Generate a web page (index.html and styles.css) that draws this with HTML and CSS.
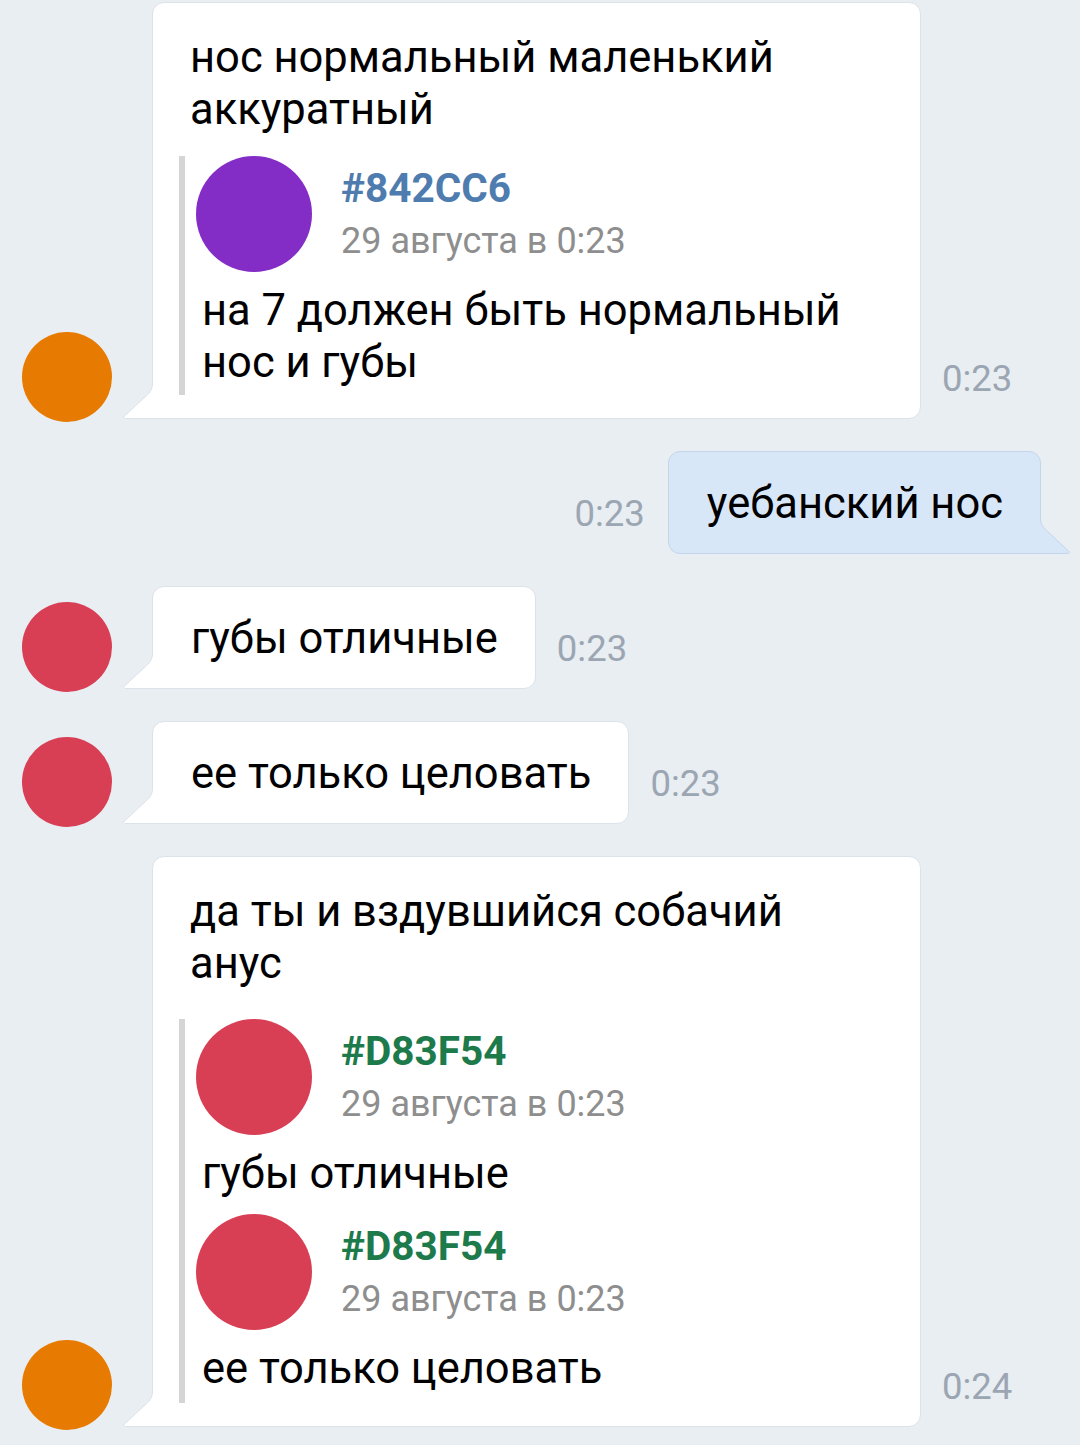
FILE: index.html
```html
<!DOCTYPE html>
<html lang="ru">
<head>
  <meta charset="UTF-8">
  <title>Сообщения</title>
  <link rel="stylesheet" href="styles.css">
</head>
<body>
  <div class="chat">

    <div class="row in">
      <div class="avatar av-orange"></div>
      <div class="bubble wide">
        <div class="text">нос нормальный маленький аккуратный</div>
        <div class="fwd">
          <div class="fwd-item">
            <div class="fwd-head">
              <div class="fwd-avatar av-purple"></div>
              <div class="fwd-meta">
                <div class="fwd-name name-blue">#842CC6</div>
                <div class="fwd-date">29 августа в 0:23</div>
              </div>
            </div>
            <div class="fwd-text">на 7 должен быть нормальный нос и губы</div>
          </div>
        </div>
        <svg class="tail" viewBox="0 0 32 36"><path class="tail-fill" d="M32 0 V36 H4 C1.5 36 0.8 34.6 2.5 33 L24.5 12.5 C28 9.5 30.5 6 30.5 0 Z"/><path class="tail-line" d="M30.5 0 C30.5 6 28 9.5 24.5 12.5 L2.5 33 C0.8 34.6 1.5 35.5 4 35.5 H32"/></svg>
      </div>
      <div class="time">0:23</div>
    </div>

    <div class="row out">
      <div class="time">0:23</div>
      <div class="bubble mine">
        <div class="text">уебанский нос</div>
        <svg class="tail" viewBox="0 0 32 36"><path class="tail-fill" d="M32 0 V36 H4 C1.5 36 0.8 34.6 2.5 33 L24.5 12.5 C28 9.5 30.5 6 30.5 0 Z"/><path class="tail-line" d="M30.5 0 C30.5 6 28 9.5 24.5 12.5 L2.5 33 C0.8 34.6 1.5 35.5 4 35.5 H32"/></svg>
      </div>
    </div>

    <div class="row in">
      <div class="avatar av-red"></div>
      <div class="bubble">
        <div class="text">губы отличные</div>
        <svg class="tail" viewBox="0 0 32 36"><path class="tail-fill" d="M32 0 V36 H4 C1.5 36 0.8 34.6 2.5 33 L24.5 12.5 C28 9.5 30.5 6 30.5 0 Z"/><path class="tail-line" d="M30.5 0 C30.5 6 28 9.5 24.5 12.5 L2.5 33 C0.8 34.6 1.5 35.5 4 35.5 H32"/></svg>
      </div>
      <div class="time">0:23</div>
    </div>

    <div class="row in">
      <div class="avatar av-red"></div>
      <div class="bubble">
        <div class="text">ее только целовать</div>
        <svg class="tail" viewBox="0 0 32 36"><path class="tail-fill" d="M32 0 V36 H4 C1.5 36 0.8 34.6 2.5 33 L24.5 12.5 C28 9.5 30.5 6 30.5 0 Z"/><path class="tail-line" d="M30.5 0 C30.5 6 28 9.5 24.5 12.5 L2.5 33 C0.8 34.6 1.5 35.5 4 35.5 H32"/></svg>
      </div>
      <div class="time">0:23</div>
    </div>

    <div class="row in grouped">
      <div class="avatar av-orange"></div>
      <div class="bubble wide">
        <div class="text">да ты и вздувшийся собачий анус</div>
        <div class="fwd spaced">
          <div class="fwd-item">
            <div class="fwd-head">
              <div class="fwd-avatar av-red"></div>
              <div class="fwd-meta">
                <div class="fwd-name name-green">#D83F54</div>
                <div class="fwd-date">29 августа в 0:23</div>
              </div>
            </div>
            <div class="fwd-text">губы отличные</div>
          </div>
          <div class="fwd-item">
            <div class="fwd-head">
              <div class="fwd-avatar av-red"></div>
              <div class="fwd-meta">
                <div class="fwd-name name-green">#D83F54</div>
                <div class="fwd-date">29 августа в 0:23</div>
              </div>
            </div>
            <div class="fwd-text">ее только целовать</div>
          </div>
        </div>
        <svg class="tail" viewBox="0 0 32 36"><path class="tail-fill" d="M32 0 V36 H4 C1.5 36 0.8 34.6 2.5 33 L24.5 12.5 C28 9.5 30.5 6 30.5 0 Z"/><path class="tail-line" d="M30.5 0 C30.5 6 28 9.5 24.5 12.5 L2.5 33 C0.8 34.6 1.5 35.5 4 35.5 H32"/></svg>
      </div>
      <div class="time">0:24</div>
    </div>

    <div class="row in">
      <div class="avatar empty"></div>
      <div class="bubble next"></div>
    </div>

  </div>
</body>
</html>
```

FILE: styles.css
```css
html, body {
  margin: 0;
  overflow: hidden;
}
body {
  background: #e9eef3;
  font-family: Roboto, "Noto Sans", sans-serif;
  color: #000;
}
.chat {
  padding-top: 2px;
}
.row {
  display: flex;
  align-items: flex-end;
  margin-bottom: 32px;
}
.row.in {
  padding-left: 22px;
}
.row.out {
  justify-content: flex-end;
  padding-right: 39px;
}
.row.grouped {
  margin-bottom: 18px;
}
.avatar {
  width: 90px;
  height: 90px;
  border-radius: 50%;
  flex-shrink: 0;
  margin-right: 40px;
  margin-bottom: -3px;
}
.avatar.empty {
  visibility: hidden;
}
.av-orange { background: #e77a00; }
.av-red { background: #d83f54; }
.av-purple { background: #842cc6; }

.bubble {
  position: relative;
  box-sizing: border-box;
  max-width: 769px;
  background: #fff;
  border: 1px solid #dce2e9;
  border-radius: 12px;
  padding: 26px 37px 23px 38px;
  font-size: 43.5px;
  line-height: 52px;
}
.row.in .bubble {
  border-bottom-left-radius: 0;
}
.bubble.wide {
  width: 769px;
  padding: 29px 50px 23px 26px;
}
.bubble.wide .text {
  padding-left: 11px;
}
.bubble.mine {
  background: #d8e7f8;
  border-color: #c4d5ea;
  border-bottom-right-radius: 0;
}
.bubble.next {
  width: 769px;
  height: 120px;
}

.tail {
  position: absolute;
  left: -31px;
  bottom: -1px;
  width: 32px;
  height: 36px;
}
.tail-fill {
  fill: #fff;
}
.tail-line {
  fill: none;
  stroke: #dce2e9;
  stroke-width: 1;
}
.bubble.mine .tail {
  left: auto;
  right: -31px;
  transform: scaleX(-1);
}
.bubble.mine .tail-fill {
  fill: #d8e7f8;
}
.bubble.mine .tail-line {
  stroke: #c4d5ea;
}

.time {
  flex-shrink: 0;
  font-size: 36.5px;
  line-height: 40px;
  color: #9ba6b2;
  margin-left: 21px;
  padding-bottom: 20px;
}
.row.out .time {
  margin-left: 0;
  margin-right: 23px;
}

.fwd {
  margin-top: 20px;
  border-left: 6px solid #d5d5d5;
  padding: 0 0 6px 11px;
}
.fwd.spaced {
  margin-top: 29px;
  padding-bottom: 8px;
}
.fwd-item + .fwd-item {
  margin-top: 14px;
}
.fwd-head {
  display: flex;
}
.fwd-avatar {
  width: 116px;
  height: 116px;
  border-radius: 50%;
  flex-shrink: 0;
  margin-right: 29px;
}
.fwd-name {
  font-weight: bold;
  font-size: 40.5px;
  line-height: 52px;
  margin-top: 6px;
}
.name-blue { color: #4f7cae; }
.name-green { color: #1d7a4b; }
.fwd-date {
  font-size: 36px;
  line-height: 54px;
  color: #8e8e8e;
}
.fwd-text {
  margin-top: 13px;
  padding-left: 6px;
}
```
